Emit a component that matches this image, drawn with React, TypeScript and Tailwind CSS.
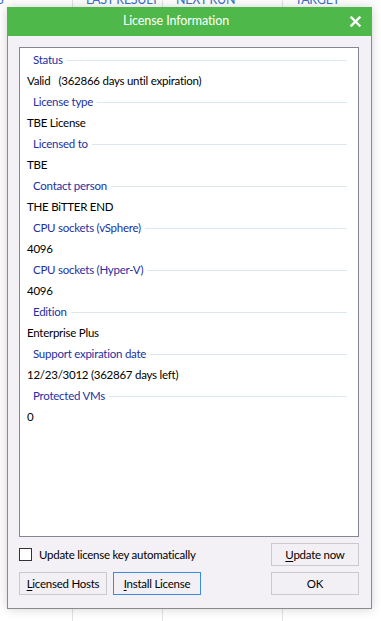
import React from "react";

const groups: [string, string][] = [
  ["Status", "Valid\u00a0\u00a0 (362866 days until expiration)"],
  ["License type", "TBE License"],
  ["Licensed to", "TBE"],
  ["Contact person", "THE BiTTER END"],
  ["CPU sockets (vSphere)", "4096"],
  ["CPU sockets (Hyper-V)", "4096"],
  ["Edition", "Enterprise Plus"],
  ["Support expiration date", "12/23/3012 (362867 days left)"],
  ["Protected VMs", "0"],
];

function Btn({ u, rest, active }: { u: string; rest: string; active?: boolean }) {
  return (
    <button
      className={
        "w-[88px] h-[23px] border bg-[#f3f0f5] text-[11.5px] tracking-[-0.25px] text-black flex items-center justify-center leading-none " +
        (active ? "border-[#3c8be0]" : "border-[#cbc9cd]")
      }
    >
      <span>
        <span className="underline underline-offset-2">{u}</span>
        {rest}
      </span>
    </button>
  );
}

export default function App() {
  return (
    <div
      className="relative w-[381px] h-[621px] bg-white overflow-hidden"
      style={{ fontFamily: 'Lato, "Noto Sans", sans-serif' }}
    >
      {/* background list */}
      <div className="absolute inset-0">
        <div className="absolute top-0 bottom-0 left-[72px] w-px bg-[#e3e3e3]" />
        <div className="absolute top-0 bottom-0 left-[162px] w-px bg-[#e3e3e3]" />
        <div className="absolute top-0 bottom-0 left-[282px] w-px bg-[#e3e3e3]" />
        <div className="absolute top-[-9px] left-[-3px] text-[12.5px] text-[#3a6fc6]">S</div>
        <div className="absolute top-[-9px] left-[86px] text-[12.5px] tracking-[-0.3px] text-[#3a6fc6]">LAST RESULT</div>
        <div className="absolute top-[-9px] left-[176px] text-[12.5px] tracking-[-0.3px] text-[#3a6fc6]">NEXT RUN</div>
        <div className="absolute top-[-9px] left-[295px] text-[12.5px] tracking-[-0.3px] text-[#3a6fc6]">TARGET</div>
      </div>

      {/* dialog */}
      <div className="absolute left-[7px] top-[7px] w-[365px] h-[602px] border border-[#8a8a8a] border-t-0 bg-[#f4f1f6] shadow-[0_0_10px_rgba(0,0,0,0.18)] flex flex-col">
        <div className="relative h-[29px] bg-[#4fb84a] flex items-center justify-center pr-[27px] text-white text-[12.5px] tracking-[-0.1px] -mx-px">
          License Information
          <svg className="absolute right-[11px] top-[9px]" width="11" height="11" viewBox="0 0 11 11">
            <path d="M1.5 1.5 L9.5 9.5 M9.5 1.5 L1.5 9.5" stroke="white" strokeWidth="2.4" strokeLinecap="square" />
          </svg>
        </div>

        <div className="ml-[11px] mr-[12px] mt-[11px] h-[490px] border border-[#848790] bg-white pt-[2px]">
          {groups.map(([h, v]) => (
            <div key={h}>
              <div className="h-[20px] flex items-center pl-[13px] pr-[11px]">
                <span className="text-[11.5px] tracking-[-0.25px] text-[#2330a2] leading-none">{h}</span>
                <div className="flex-1 h-px bg-[#dfe7ee] ml-[4px]" />
              </div>
              <div className="h-[22px] flex items-center pl-[7px] text-[11.5px] tracking-[-0.25px] text-black leading-none">{v}</div>
            </div>
          ))}
        </div>

        <div className="ml-[11px] mr-[12px] mt-[6px] flex flex-col gap-[6px]">
          <div className="flex items-center justify-between">
            <label className="flex items-center gap-[7px] text-[11.5px] tracking-[-0.25px] text-black">
              <span className="w-[13px] h-[13px] border border-[#333] bg-white" />
              Update license key automatically
            </label>
            <Btn u="U" rest="pdate now" />
          </div>
          <div className="flex items-center justify-between">
            <div className="flex gap-[6px]">
              <Btn u="L" rest="icensed Hosts" />
              <Btn u="I" rest="nstall License" active />
            </div>
            <Btn u="" rest="OK" />
          </div>
        </div>
      </div>
    </div>
  );
}
